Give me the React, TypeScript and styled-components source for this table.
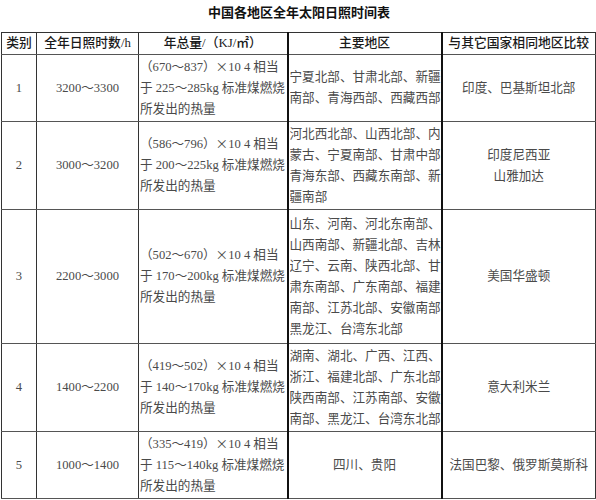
import React from "react";
import styled, { createGlobalStyle } from "styled-components";

const Global = createGlobalStyle`
  html, body { margin: 0; padding: 0; background: #fff; }
  body { width: 596px; height: 500px; overflow: hidden; }
`;

const Page = styled.div`
  width: 596px;
  padding-left: 1px;
  box-sizing: border-box;
`;

const Title = styled.h1`
  margin: 0;
  height: 32px;
  line-height: 24px;
  text-align: center;
  font-family: "Noto Sans CJK SC", sans-serif;
  font-size: 13px;
  font-weight: 700;
  color: #111;
  padding-left: 1px;
`;

const Table = styled.table`
  width: 594px;
  table-layout: fixed;
  border-collapse: collapse;
  border: 1px solid #333;
  font-family: "Liberation Serif", "Noto Sans CJK SC", serif;
  font-size: 12.6px;
  color: #4a4a4a;
`;

const Head = styled.th<{ $thick?: boolean }>`
  padding: 0;
  font-family: "Liberation Serif", "Noto Sans CJK SC", serif;
  font-weight: 500;
  font-size: 12.8px;
  color: #1a1a1a;
  text-align: center;
  vertical-align: middle;
  border-bottom: 1px solid #555;
  border-right: ${(p) => (p.$thick ? "2px solid #111" : "1px solid #333")};
`;

const HeadText = styled.div`
  height: 21px;
  line-height: 21px;
  white-space: nowrap;
  overflow: hidden;
`;

const Row = styled.tr<{ $h: number }>`
  height: ${(p) => p.$h}px;
`;

const Cell = styled.td<{ $thick?: boolean; $align?: "left" | "center" }>`
  padding: 0;
  text-align: ${(p) => p.$align ?? "center"};
  vertical-align: middle;
  line-height: 21px;
  border-bottom: 1px solid #555;
  border-right: ${(p) => (p.$thick ? "2px solid #111" : "1px solid #333")};
  overflow: hidden;
`;

const Lines = styled.div<{ $indent?: number }>`
  padding-left: ${(p) => p.$indent ?? 1}px;
  white-space: nowrap;
  overflow: hidden;
`;

const Line = styled.div`
  height: 21px;
  overflow: hidden;
`;

const Wide = styled.span`
  display: inline-block;
  width: 1em;
  line-height: 1;
  text-align: center;
  font-family: "Noto Sans CJK SC", sans-serif;
`;

function renderText(t: string) {
  const parts = t.split(/([～×])/);
  return parts.map((p, i) =>
    p === "～" || p === "×" ? <Wide key={i}>{p}</Wide> : <React.Fragment key={i}>{p}</React.Fragment>
  );
}

type RowData = {
  id: string;
  hours: string;
  total: string[];
  regions: string[];
  compare: string[];
  h: number;
};

const rows: RowData[] = [
  {
    id: "1",
    hours: "3200～3300",
    total: ["（670～837）×10 4 相当", "于 225～285kg 标准煤燃烧", "所发出的热量"],
    regions: ["宁夏北部、甘肃北部、新疆", "南部、青海西部、西藏西部"],
    compare: ["印度、巴基斯坦北部"],
    h: 67,
  },
  {
    id: "2",
    hours: "3000～3200",
    total: ["（586～796）×10 4 相当", "于 200～225kg 标准煤燃烧", "所发出的热量"],
    regions: ["河北西北部、山西北部、内", "蒙古、宁夏南部、甘肃中部、", "青海东部、西藏东南部、新", "疆南部"],
    compare: ["印度尼西亚", "山雅加达"],
    h: 88,
  },
  {
    id: "3",
    hours: "2200～3000",
    total: ["（502～670）×10 4 相当", "于 170～200kg 标准煤燃烧", "所发出的热量"],
    regions: [
      "山东、河南、河北东南部、",
      "山西南部、新疆北部、吉林、",
      "辽宁、云南、陕西北部、甘",
      "肃东南部、广东南部、福建",
      "南部、江苏北部、安徽南部、",
      "黑龙江、台湾东北部",
    ],
    compare: ["美国华盛顿"],
    h: 134,
  },
  {
    id: "4",
    hours: "1400～2200",
    total: ["（419～502）×10 4 相当", "于 140～170kg 标准煤燃烧", "所发出的热量"],
    regions: ["湖南、湖北、广西、江西、", "浙江、福建北部、广东北部、", "陕西南部、江苏南部、安徽", "南部、黑龙江、台湾东北部"],
    compare: ["意大利米兰"],
    h: 88,
  },
  {
    id: "5",
    hours: "1000～1400",
    total: ["（335～419）×10 4 相当", "于 115～140kg 标准煤燃烧", "所发出的热量"],
    regions: ["四川、贵阳"],
    compare: ["法国巴黎、俄罗斯莫斯科"],
    h: 67,
  },
];

export default function App() {
  return (
    <Page>
      <Global />
      <Title>中国各地区全年太阳日照时间表</Title>
      <Table>
        <colgroup>
          <col style={{ width: 35 }} />
          <col style={{ width: 102 }} />
          <col style={{ width: 149 }} />
          <col style={{ width: 154 }} />
          <col style={{ width: 154 }} />
        </colgroup>
        <thead>
          <tr>
            <Head><HeadText>类别</HeadText></Head>
            <Head><HeadText>全年日照时数/h</HeadText></Head>
            <Head $thick><HeadText>年总量/（KJ/㎡）</HeadText></Head>
            <Head $thick><HeadText>主要地区</HeadText></Head>
            <Head><HeadText>与其它国家相同地区比较</HeadText></Head>
          </tr>
        </thead>
        <tbody>
          {rows.map((r) => (
            <Row key={r.id} $h={r.h}>
              <Cell>{r.id}</Cell>
              <Cell>
                <Line>{renderText(r.hours)}</Line>
              </Cell>
              <Cell $thick $align="left">
                <Lines $indent={1}>
                  {r.total.map((t) => (
                    <Line key={t}>{renderText(t)}</Line>
                  ))}
                </Lines>
              </Cell>
              <Cell $thick $align={r.regions.length > 1 ? "left" : "center"}>
                <Lines $indent={r.regions.length > 1 ? 1 : 0}>
                  {r.regions.map((t) => (
                    <Line key={t}>{t}</Line>
                  ))}
                </Lines>
              </Cell>
              <Cell>
                <Lines $indent={0}>
                  {r.compare.map((t) => (
                    <Line key={t}>{t}</Line>
                  ))}
                </Lines>
              </Cell>
            </Row>
          ))}
        </tbody>
      </Table>
    </Page>
  );
}
